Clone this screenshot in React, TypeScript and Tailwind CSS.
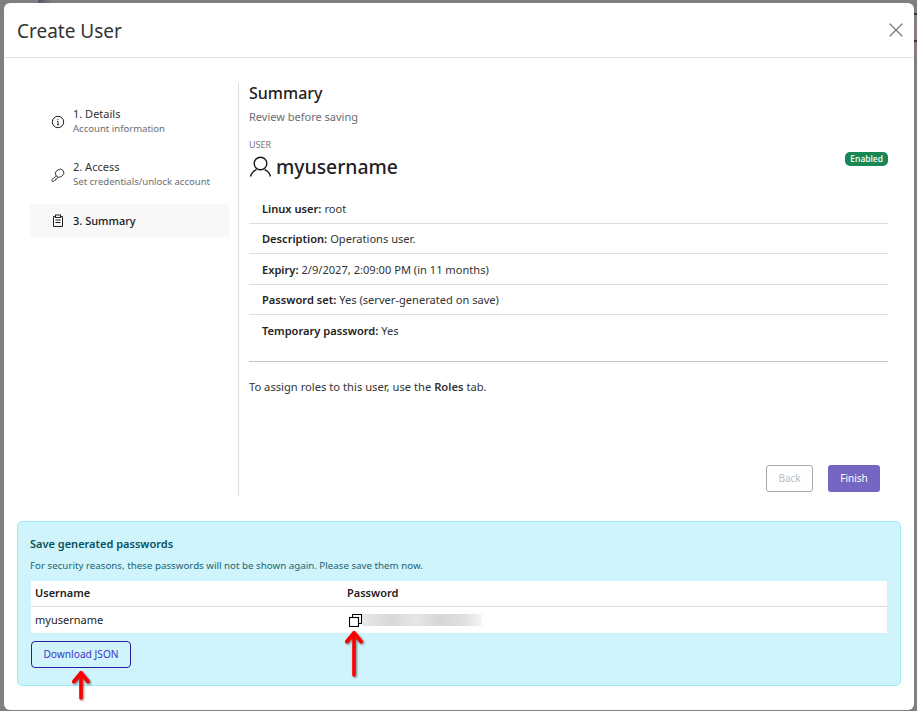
import type { ReactNode } from "react";
import { X } from "lucide-react";

const rows = [
  { label: "Linux user:", value: "root" },
  { label: "Description:", value: "Operations user." },
  { label: "Expiry:", value: "2/9/2027, 2:09:00 PM (in 11 months)" },
  { label: "Password set:", value: "Yes (server-generated on save)" },
  { label: "Temporary password:", value: "Yes" },
];

function InfoIcon() {
  return (
    <svg width="14" height="14" viewBox="0 0 14 14" fill="none" stroke="#222" strokeWidth="1">
      <circle cx="7" cy="7" r="5.7" />
      <path d="M7 6.2v3.6M6 9.8h2M6.2 6.2H7" />
      <circle cx="7" cy="4.3" r="0.6" fill="#222" stroke="none" />
    </svg>
  );
}

function KeyIcon() {
  return (
    <svg width="14" height="14" viewBox="0 0 14 14" fill="none" stroke="#333" strokeWidth="0.9">
      <ellipse cx="8.6" cy="5.2" rx="4.4" ry="3.8" transform="rotate(-35 8.6 5.2)" />
      <path d="M5.4 8L1 11.4v1.9h1.8l.7-1h1l.2-1.2h1l1-1.9" />
    </svg>
  );
}

function ClipboardIcon() {
  return (
    <svg width="14" height="14" viewBox="0 0 14 14" fill="none" stroke="#222" strokeWidth="1">
      <path d="M4.5 2.5H2.5v10h9v-10h-2" />
      <rect x="4.5" y="1" width="5" height="2.5" />
      <path d="M4.5 6h5M4.5 8.5h5" />
    </svg>
  );
}

function UserIcon() {
  return (
    <svg width="22" height="22" viewBox="0 0 22 22" fill="none" stroke="#161616" strokeWidth="1.4">
      <circle cx="11.5" cy="7.5" r="6.3" />
      <path d="M1.5 20.5c1-3.6 3.6-6 6-6.8M21.5 20.5c-1-3.6-3.6-6-6-6.8" />
    </svg>
  );
}

function CopyIcon() {
  return (
    <svg width="13" height="13" viewBox="0 0 13 13" fill="none" stroke="#000" strokeWidth="1.1">
      <rect x="0.5" y="3.5" width="9" height="9" fill="#fff" />
      <path d="M3.5 3.5v-3h9v9h-3" />
    </svg>
  );
}

function RedArrow({ height }: { height: number }) {
  return (
    <svg width="20" height={height} viewBox={`0 0 20 ${height}`} fill="none" className="drop-shadow-[1.5px_1.5px_1px_rgba(0,0,0,0.5)]">
      <path d={`M10 4V${height - 2}`} stroke="#ff0000" strokeWidth="3.6" strokeLinecap="round" />
      <path d="M3 12.5L10 4l7 8.5" stroke="#ff0000" strokeWidth="4" strokeLinecap="round" strokeLinejoin="round" />
    </svg>
  );
}

function Step({ icon, title, sub, active }: { icon: ReactNode; title: string; sub?: string; active?: boolean }) {
  return (
    <div className={`flex items-center pl-[21px] ${active ? "bg-[#f8f8f8] h-[33px] mt-[3px]" : "h-[53px]"}`}>
      <span className="w-[22px] shrink-0 flex">{icon}</span>
      <div>
        <div className={`text-[11px] leading-[14px] ${active ? "font-medium text-[#161616]" : "text-[#333]"}`}>{title}</div>
        {sub && <div className="text-[9.55px] leading-[15px] text-[#6a6e73]">{sub}</div>}
      </div>
    </div>
  );
}

export default function App() {
  return (
    <div className="relative h-[711px] overflow-hidden bg-[#7f7f7f] pt-[3px] px-[4px] font-['Noto_Sans',sans-serif]">
      {/* bits of the page behind the backdrop */}
      <div className="absolute left-[38px] top-0 w-[14px] h-[3px] bg-[linear-gradient(90deg,#4f5466,#7f7f7f)]" />
      <div className="absolute right-0 top-[27px] w-[3px] h-[28px] bg-[#8a7a7a]" />
      <div className="absolute right-0 top-[13px] w-[3px] h-[2px] bg-[#333]" />
      <div className="absolute right-0 top-[40px] w-[3px] h-[2px] bg-[#333]" />

      <div className="relative w-[910px] h-[707px] bg-white rounded-[6px] flex flex-col">
        <div className="h-[55px] shrink-0 border-b border-[#e2e2e2] flex items-center justify-between pl-[13px] pr-[6px]">
          <h1 className="text-[19px] mt-[2px] text-[#333]">Create User</h1>
          <X size={24} strokeWidth={1.2} color="#777" />
        </div>

        <div className="h-[438px] shrink-0 flex pt-[25px]">
          <div className="w-[234px] shrink-0 pl-[26px] pr-[9px] pt-[12px]">
            <Step icon={<InfoIcon />} title="1. Details" sub="Account information" />
            <Step icon={<KeyIcon />} title="2. Access" sub="Set credentials/unlock account" />
            <Step icon={<ClipboardIcon />} title="3. Summary" active />
          </div>

          <div className="flex-1 border-l border-[#dcdcdc] pl-[10px] pr-[26px] flex flex-col">
            <h2 className="text-[16px] leading-[22px] -mt-[1px] font-medium text-[#222]">Summary</h2>
            <p className="text-[11px] leading-[14px] mt-[6px] text-[#6a6e73]">Review before saving</p>
            <div className="text-[9px] leading-[12px] mt-[15px] text-[#777]">USER</div>
            <div className="flex items-center justify-between mt-[2px]">
              <div className="flex items-center gap-[5px]">
                <UserIcon />
                <span className="text-[19.35px] leading-[28px] font-medium text-[#222]">myusername</span>
              </div>
              <span className="bg-[#198754] text-white text-[8.5px] font-medium leading-[14px] px-[5px] rounded-[5px] -mt-[17px]">Enabled</span>
            </div>
            <div className="mt-[12px]">
              {rows.map((r, i) => (
                <div key={r.label} className={`h-[30.5px] pl-[13px] pt-[3px] flex items-center text-[11.1px] text-[#333] ${i < 4 ? "border-b border-[#dedede]" : ""}`}>
                  <span className="font-semibold text-[#222] mr-[3px]">{r.label}</span>
                  {r.value}
                </div>
              ))}
            </div>
            <div className="mt-[15px] border-t border-[#c4c4c4] pt-[17px] text-[11.2px] leading-[15px] text-[#333]">
              To assign roles to this user, use the <span className="font-semibold">Roles</span> tab.
            </div>
            <div className="mt-auto mb-[4px] flex justify-end gap-[15px] pr-[8px]">
              <button className="h-[27px] w-[47px] rounded-[3px] border border-[#aaa] text-[10px] text-[#b8bcc0]">Back</button>
              <button className="h-[27px] w-[52px] rounded-[3px] bg-[#7566c4] text-[10px] text-white">Finish</button>
            </div>
          </div>
        </div>

        <div className="relative mt-[25px] ml-[13px] w-[884px] h-[165px] bg-[#cff4fc] border border-[#9eeaf9] rounded-[5px] px-[13px] pt-[14px]">
          <div className="text-[11px] leading-[16px] -ml-[1px] font-semibold text-[#055160]">Save generated passwords</div>
          <p className="text-[9.75px] leading-[12px] mt-[8px] -ml-[1px] text-[#1c6473]">For security reasons, these passwords will not be shown again. Please save them now.</p>
          <div className="mt-[9px] bg-white text-[11px] text-[#222]">
            <div className="flex h-[26px] items-center border-b border-[#dedede] font-semibold">
              <div className="w-[316px] pl-[4px]">Username</div>
              <div>Password</div>
            </div>
            <div className="flex h-[26px] items-center">
              <div className="w-[316px] pl-[4px]">myusername</div>
              <div className="flex items-center pl-[2px]">
                <CopyIcon />
                <div className="w-[120px] h-[12px] bg-[linear-gradient(90deg,#e8e8e8,#d8d8d8_25%,#e6e6e6_45%,#d6d6d6_65%,#e0e0e0_85%,#f6f6f6)]" />
              </div>
            </div>
          </div>
          <button className="mt-[8px] w-[100px] h-[27px] border border-[#2a1fa0] rounded-[4px] text-[10.2px] text-[#3f36c0]">Download JSON</button>
          <div className="absolute left-[53px] top-[147px]"><RedArrow height={31} /></div>
          <div className="absolute left-[326px] top-[107px]"><RedArrow height={48} /></div>
        </div>
      </div>
    </div>
  );
}
